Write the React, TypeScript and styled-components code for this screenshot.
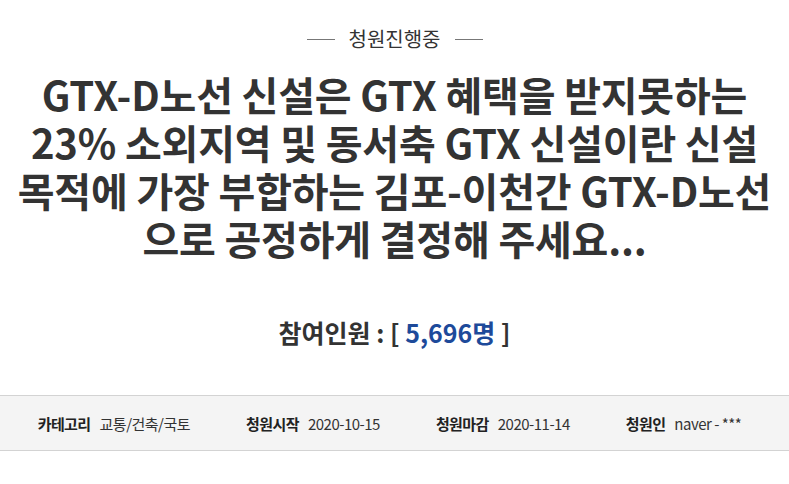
import styled, { createGlobalStyle } from "styled-components";

const GlobalStyle = createGlobalStyle`
  body {
    margin: 0;
    background: #fff;
    font-family: "Noto Sans CJK KR", "Noto Sans", sans-serif;
    color: #333;
  }
`;

const Page = styled.div`
  width: 789px;
  padding-top: 24px;
`;

const Status = styled.div`
  display: flex;
  align-items: center;
  justify-content: center;
  gap: 14px;
  font-size: 20px;
  color: #333;
  line-height: 30px;
`;

const Dash = styled.span`
  width: 28px;
  height: 1px;
  background: #777;
`;

const Title = styled.h1`
  margin: 16px 0 0;
  font-size: 40px;
  font-weight: 700;
  line-height: 48px;
  text-align: center;
  color: #333;
  letter-spacing: -0.2px;
`;

const Count = styled.div`
  margin-top: 53px;
  text-align: center;
  font-size: 25px;
  font-weight: 700;
  color: #333;
  line-height: 34px;
`;

const Number = styled.span`
  color: #1d4a9a;
`;

const InfoBar = styled.div`
  margin-top: 46px;
  height: 54px;
  padding-right: 10px;
  background: #f4f4f4;
  border-top: 1px solid #d3d3d3;
  border-bottom: 1px solid #d3d3d3;
  display: flex;
  align-items: center;
  justify-content: center;
  gap: 56px;
  font-size: 15px;
`;

const Item = styled.div`
  display: flex;
  gap: 9px;
  align-items: baseline;
`;

const Label = styled.span`
  font-weight: 700;
  color: #222;
  letter-spacing: -0.6px;
`;

const Value = styled.span`
  color: #333;
  letter-spacing: -0.5px;
`;

export default function App() {
  return (
    <Page>
      <GlobalStyle />
      <Status>
        <Dash />
        청원진행중
        <Dash />
      </Status>
      <Title>
        GTX-D노선 신설은 GTX 혜택을 받지못하는
        <br />
        23% 소외지역 및 동서축 GTX 신설이란 신설
        <br />
        목적에 가장 부합하는 김포-이천간 GTX-D노선
        <br />
        으로 공정하게 결정해 주세요...
      </Title>
      <Count>
        참여인원 : [ <Number>5,696명</Number> ]
      </Count>
      <InfoBar>
        <Item>
          <Label>카테고리</Label>
          <Value>교통/건축/국토</Value>
        </Item>
        <Item>
          <Label>청원시작</Label>
          <Value>2020-10-15</Value>
        </Item>
        <Item>
          <Label>청원마감</Label>
          <Value>2020-11-14</Value>
        </Item>
        <Item>
          <Label>청원인</Label>
          <Value>naver - ***</Value>
        </Item>
      </InfoBar>
    </Page>
  );
}
